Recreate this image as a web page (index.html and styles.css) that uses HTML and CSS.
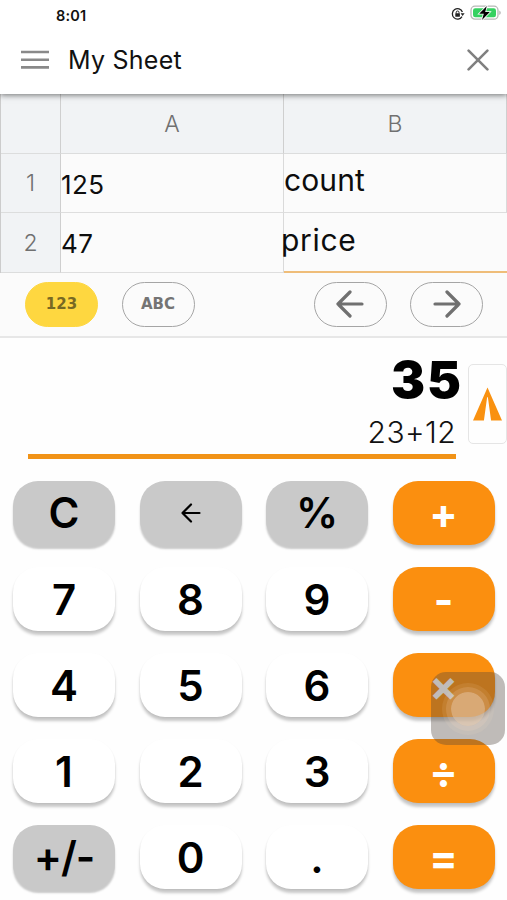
FILE: index.html
```html
<!DOCTYPE html>
<html lang="en">
<head>
<meta charset="utf-8">
<title>My Sheet</title>
<link rel="stylesheet" href="styles.css">
</head>
<body>
<main class="app">
  <header class="top">
    <div class="status">
      <span class="time">8:01</span>
      <span class="status-icons">
        <svg class="lock" width="14" height="14" viewBox="0 0 14 14"><path d="M11 9.6A5.2 5.2 0 1 1 11.4 5" fill="none" stroke="#222" stroke-width="1.3"/><path d="M9.6 6.3h4l-2 2.6z" fill="#222"/><path d="M5.2 6.6V5.4a1.4 1.4 0 0 1 2.8 0v1.2" fill="none" stroke="#222"/><rect x="4.3" y="6.2" width="4.6" height="3.6" rx=".6" fill="#222"/></svg>
        <svg width="32" height="16" viewBox="0 0 32 16"><rect x="1" y="1.2" width="27" height="13" rx="4" fill="#fff" stroke="#b5b9b5" stroke-width="1.3"/><rect x="3" y="3.2" width="23" height="9" rx="2.2" fill="#35d160"/><path d="M29.4 5.5q2.6 2.2 0 4.6z" fill="#aaa"/><path d="M16.8 1 9.2 8.7h4.6L12 15l7.8-8h-4.6z" fill="#000" stroke="#fff" stroke-width="1.6" paint-order="stroke"/></svg>
      </span>
    </div>
    <div class="title-bar">
      <svg width="28" height="20" viewBox="0 0 28 20" stroke="#898989" stroke-width="2.6"><path d="M0 2h28M0 9.7h28M0 17.4h28"/></svg>
      <h1 class="title">My Sheet</h1>
      <svg class="close" width="22" height="22" viewBox="0 0 22 22" fill="none" stroke="#808080" stroke-width="2.6" stroke-linecap="round"><path d="m1.6 1.6 18.8 18.8m0-18.8L1.6 20.4"/></svg>
    </div>
  </header>

  <section class="sheet">
    <div class="head"></div><div class="head">A</div><div class="head">B</div>
    <div class="head">1</div><div class="cell">125</div><div class="cell label count"><span>count</span></div>
    <div class="head">2</div><div class="cell">47</div><div class="cell label price"><span>price</span></div>
  </section>

  <nav class="tools">
    <button class="pill active">123</button>
    <button class="pill">ABC</button>
    <button class="pill prev"><svg width="28" height="28" viewBox="0 0 28 28"><path d="M26 14H2M14 2 2 14l12 12"/></svg></button>
    <button class="pill"><svg width="28" height="28" viewBox="0 0 28 28"><path d="M2 14h24M14 2l12 12-12 12"/></svg></button>
  </nav>

  <section class="display">
    <div class="readout">
      <div class="result">35</div>
      <div class="formula">23+12</div>
    </div>
    <button class="send"><svg width="29" height="34" viewBox="0 0 30 34"><path d="M15 0 0 34h11.3L14.6 10h.8l3.3 24H30z" fill="#f99110"/></svg></button>
  </section>

  <section class="keys">
    <button class="key gray">C</button>
    <button class="key gray"><svg width="20" height="20" viewBox="0 0 20 20" fill="none" stroke="#000" stroke-width="2.2" stroke-linecap="round" stroke-linejoin="round"><path d="M18.5 10H1.5M10 1.5 1.5 10l8.5 8.5"/></svg></button>
    <button class="key gray">%</button>
    <button class="key op">+</button>
    <button class="key">7</button><button class="key">8</button><button class="key">9</button>
    <button class="key op">-</button>
    <button class="key">4</button><button class="key">5</button><button class="key">6</button>
    <div class="multiply"><button class="key op">×</button><span class="touch"><i class="touch-dot"></i></span></div>
    <button class="key">1</button><button class="key">2</button><button class="key">3</button>
    <button class="key op">÷</button>
    <button class="key gray sign">+/-</button>
    <button class="key">0</button><button class="key">.</button>
    <button class="key op">=</button>
  </section>
</main>
</body>
</html>
```
FILE: styles.css
```css
* { box-sizing: border-box; }
body { margin: 0; background: #fefefe; font-family: Inter, "Liberation Sans", sans-serif; color: #111; }
button { font: inherit; color: inherit; border: 0; padding: 0; margin: 0; background: none; }
svg { display: block; flex: none; }
.app { width: 507px; height: 900px; overflow: hidden; }

.top { position: relative; z-index: 1; height: 94px; background: #fff; box-shadow: 0 1px 6px rgba(0,0,0,.55); }
.status { display: flex; justify-content: space-between; height: 30px; padding: 5px 5px 0 56px; }
.time { font-size: 14.5px; font-weight: 600; line-height: 21px; letter-spacing: .2px; }
.status-icons { display: flex; gap: 5px; }
.lock { margin-top: 2px; }
.title-bar { display: flex; align-items: center; height: 59px; padding: 0 18px 0 21px; }
.title { margin: 0 0 0 19px; font-size: 25px; font-weight: 400; line-height: 30px; letter-spacing: .25px; }
.close { margin-left: auto; }

.sheet { display: grid; grid-template-columns: 60px 223px 223px; grid-template-rows: 60px 59px 60px; height: 179px; border-left: 1px solid #ccc; width: 507px; background: #fbfbfb; }
.head { display: flex; align-items: center; justify-content: center; background: #f1f3f5; color: #707070; font-size: 23px; font-weight: 300; border-right: 1px solid #cfcfcf; border-bottom: 1.5px solid #dcdddd; }
.cell { display: flex; align-items: center; padding-top: 2px; font-size: 26px; letter-spacing: .4px; color: #0d0d0d; border-right: 1px solid #dadada; border-bottom: 1.5px solid #dedede; }
.label { font-size: 30px; letter-spacing: .5px; }
.count { padding-bottom: 9px; letter-spacing: .1px; }
.price { padding-bottom: 6px; border-right: 0; border-bottom: 2px solid #efbd79; }
.price span { margin-left: -3px; letter-spacing: .7px; }

.tools { display: flex; align-items: center; height: 65px; padding: 0 24px 1px 25px; background: #fbfbfb; border-bottom: 2px solid #e7e7e7; }
.pill { display: flex; align-items: center; justify-content: center; width: 73px; height: 45px; border: 1px solid #a5a5a5; border-radius: 23px; color: #747474; font: 700 15px "DejaVu Sans", sans-serif; margin-right: 23.5px; }
.pill:last-child { margin-right: 0; }
.pill.active { background: #fed740; border-color: #fed740; color: #786923; }
.prev { margin-left: auto; }
.pill svg { fill: none; stroke: #707070; stroke-width: 3.2; stroke-linecap: round; stroke-linejoin: round; }

.display { display: flex; justify-content: space-between; height: 122px; padding: 0 0 0 28px; }
.readout { width: 428px; height: 121px; border-bottom: 5px solid #f19317; text-align: right; }
.result { height: 76px; padding-top: 12px; margin-right: -7px; font-size: 51px; font-weight: 900; line-height: 60px; letter-spacing: 2px; color: #000; }
.formula { font-size: 30px; font-weight: 300; line-height: 36px; letter-spacing: .4px; }
.send { display: flex; align-items: center; justify-content: center; width: 39px; height: 80px; margin-top: 26px; border: 1.5px solid #e5e5e5; border-radius: 5px; }

.keys { display: grid; grid-template-columns: repeat(4, 102px); column-gap: 24.5px; grid-auto-rows: 64px; row-gap: 22px; padding: 21px 0 0 13px; }
.key { display: flex; align-items: center; justify-content: center; width: 102px; height: 64px; border-radius: 25px; background: #fff; font-size: 42px; font-weight: 560; color: #000; box-shadow: 0 4px 3px rgba(0,0,0,.21), 0 1px 2px rgba(0,0,0,.06); }
.gray { background: #c9c9c9; box-shadow: 0 4px 2px #c9c9c9; padding-bottom: 1px; }
.sign { letter-spacing: -1px; }
.op { background: #fb8f0f; color: #fff; font-weight: 650; }
.multiply { position: relative; }
.touch { position: absolute; left: 38px; top: 19px; width: 74px; height: 73px; border-radius: 15px; background: rgba(80,68,60,.36); display: flex; align-items: center; justify-content: center; }
.touch-dot { width: 34px; height: 34px; border-radius: 50%; background: rgba(235,205,175,.6); box-shadow: 0 0 0 5px rgba(255,220,190,.16), 0 0 0 9px rgba(255,225,200,.1); }
```
